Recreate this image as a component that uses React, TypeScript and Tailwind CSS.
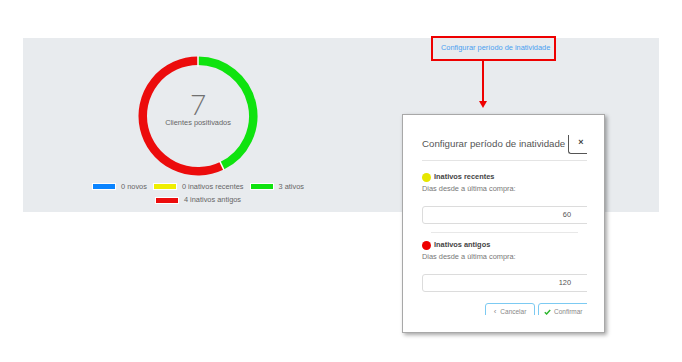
import React from "react";

const font = { fontFamily: '"Liberation Sans", Arial, sans-serif' };

function Donut() {
  return (
    <div className="relative w-[120px] h-[120px]">
      <svg width="120" height="120" viewBox="0 0 120 120">
        <path d="M 60 4.75 A 55.25 55.25 0 0 1 83.97 109.78" fill="none" stroke="#0fe30f" strokeWidth="8.5" />
        <path d="M 83.97 109.78 A 55.25 55.25 0 1 1 60 4.75" fill="none" stroke="#ec0c0c" strokeWidth="8.5" />
        <line x1="60" y1="0" x2="60" y2="11" stroke="#ffffff" strokeWidth="1.5" />
        <line x1="81.7" y1="105.05" x2="86.03" y2="114.06" stroke="#ffffff" strokeWidth="1.5" />
      </svg>
      <div className="absolute inset-0 flex flex-col items-center pt-[34px]">
        <div
          className="h-[28px] leading-[28px] text-[28px] font-light text-[#707070]"
          style={{ fontFamily: 'Lato, "Open Sans", sans-serif' }}
        >
          7
        </div>
        <div className="leading-[10px] text-[7.4px] text-[#666]">Clientes positivados</div>
      </div>
    </div>
  );
}

function LegendItem({ color, label }: { color: string; label: string }) {
  return (
    <div className="flex items-center h-[13.5px]">
      <div className={`w-[24px] h-[7px] border border-white ${color}`} />
      <span className="ml-[5px] text-[7.4px] leading-[10px] text-[#666]">{label}</span>
    </div>
  );
}

export default function App() {
  return (
    <div className="relative w-[682px] h-[362px] bg-white overflow-hidden" style={font}>
      <div className="pt-[38px] pl-[23px]">
        <div className="w-[636px] h-[174px] bg-[#e8ebee] flex">
          <div className="w-[350px] flex flex-col items-center pt-[18px]">
            <Donut />
            <div className="mt-[4px] w-[230px] flex flex-wrap justify-center gap-x-[6px]">
              <LegendItem color="bg-[#0a84ff]" label="0 novos" />
              <LegendItem color="bg-[#eeee00]" label="0 inativos recentes" />
              <LegendItem color="bg-[#0fe30f]" label="3 ativos" />
              <LegendItem color="bg-[#ec0c0c]" label="4 inativos antigos" />
            </div>
          </div>
          <div className="flex-1 pl-[68px] pt-[5px]">
            <div className="text-[7.4px] leading-[10px] text-[#4a9ff0] whitespace-nowrap">
              Configurar período de inatividade
            </div>
          </div>
        </div>
      </div>

      {/* annotation */}
      <div className="absolute left-[431px] top-[36px] w-[125px] h-[25px] border-2 border-[#ee0000]" />
      <svg className="absolute left-[478px] top-[60px]" width="10" height="50" viewBox="0 0 10 50">
        <line x1="5" y1="0" x2="5" y2="42" stroke="#ee0000" strokeWidth="2" />
        <polygon points="1,41 9,41 5,48" fill="#ee0000" />
      </svg>

      {/* modal */}
      <div className="absolute left-[402px] top-[114px] w-[203px] h-[219px] bg-white border border-[#a8a8a8] shadow-[2px_2px_4px_rgba(0,0,0,0.35)]">
        <div className="w-[184px] h-[200px] overflow-hidden">
          <div className="flex pl-[19px] h-[45px]">
            <div className="mt-[22px] text-[9.7px] leading-[13px] text-[#555] whitespace-nowrap">
              Configurar período de inatividade
            </div>
            <div className="ml-[3px] mt-[20px] w-[22px] h-[19px] shrink-0 border-l border-b border-[#555] rounded-bl-[3px] pl-[9px] pt-[2px] text-[9px] leading-[10px] font-bold text-[#444]">
              ×
            </div>
          </div>
          <div className="ml-[19px] h-px bg-[#e4e4e4]" />

          <div className="pl-[19px]">
            <div className="mt-[10px] flex items-center h-[12px]">
              <div className="w-[9px] h-[9px] rounded-full bg-[#e6e600]" />
              <span className="ml-[3px] text-[7.4px] font-bold text-[#444]">Inativos recentes</span>
            </div>
            <div className="mt-[1px] text-[7.4px] leading-[10px] text-[#777]">Dias desde a última compra:</div>
            <div className="mt-[12px] w-[190px] h-[18px] border border-[#dcdcdc] rounded-[3px] flex items-center justify-end pr-[40px] text-[7.4px] text-[#555]">
              60
            </div>
          </div>
          <div className="ml-[28px] mt-[8px] w-[147px] h-px bg-[#e8e8e8]" />

          <div className="pl-[19px]">
            <div className="mt-[6px] flex items-center h-[12px]">
              <div className="w-[9px] h-[9px] rounded-full bg-[#ee0000]" />
              <span className="ml-[3px] text-[7.4px] font-bold text-[#444]">Inativos antigos</span>
            </div>
            <div className="mt-[1px] text-[7.4px] leading-[10px] text-[#777]">Dias desde a última compra:</div>
            <div className="mt-[12px] w-[190px] h-[18px] border border-[#dcdcdc] rounded-[3px] flex items-center justify-end pr-[40px] text-[7.4px] text-[#555]">
              120
            </div>
          </div>

          <div className="mt-[11px] pl-[82px] flex gap-[3px]">
            <div className="w-[50px] h-[18px] shrink-0 border border-[#7ccaf2] rounded-t-[3px] flex items-center justify-center text-[6.5px] text-[#888]">
              <span className="mr-[4px] text-[8px] leading-none">‹</span>Cancelar
            </div>
            <div className="w-[56px] h-[18px] shrink-0 border border-[#7ccaf2] rounded-t-[3px] flex items-center pl-[5px] text-[6.5px] text-[#888]">
              <svg width="7" height="6" viewBox="0 0 7 6" className="mr-[3px]">
                <path d="M0.8 3.2 L2.6 5 L6.2 1" fill="none" stroke="#2bb52b" strokeWidth="1.4" />
              </svg>
              Confirmar
            </div>
          </div>
        </div>
      </div>
    </div>
  );
}
